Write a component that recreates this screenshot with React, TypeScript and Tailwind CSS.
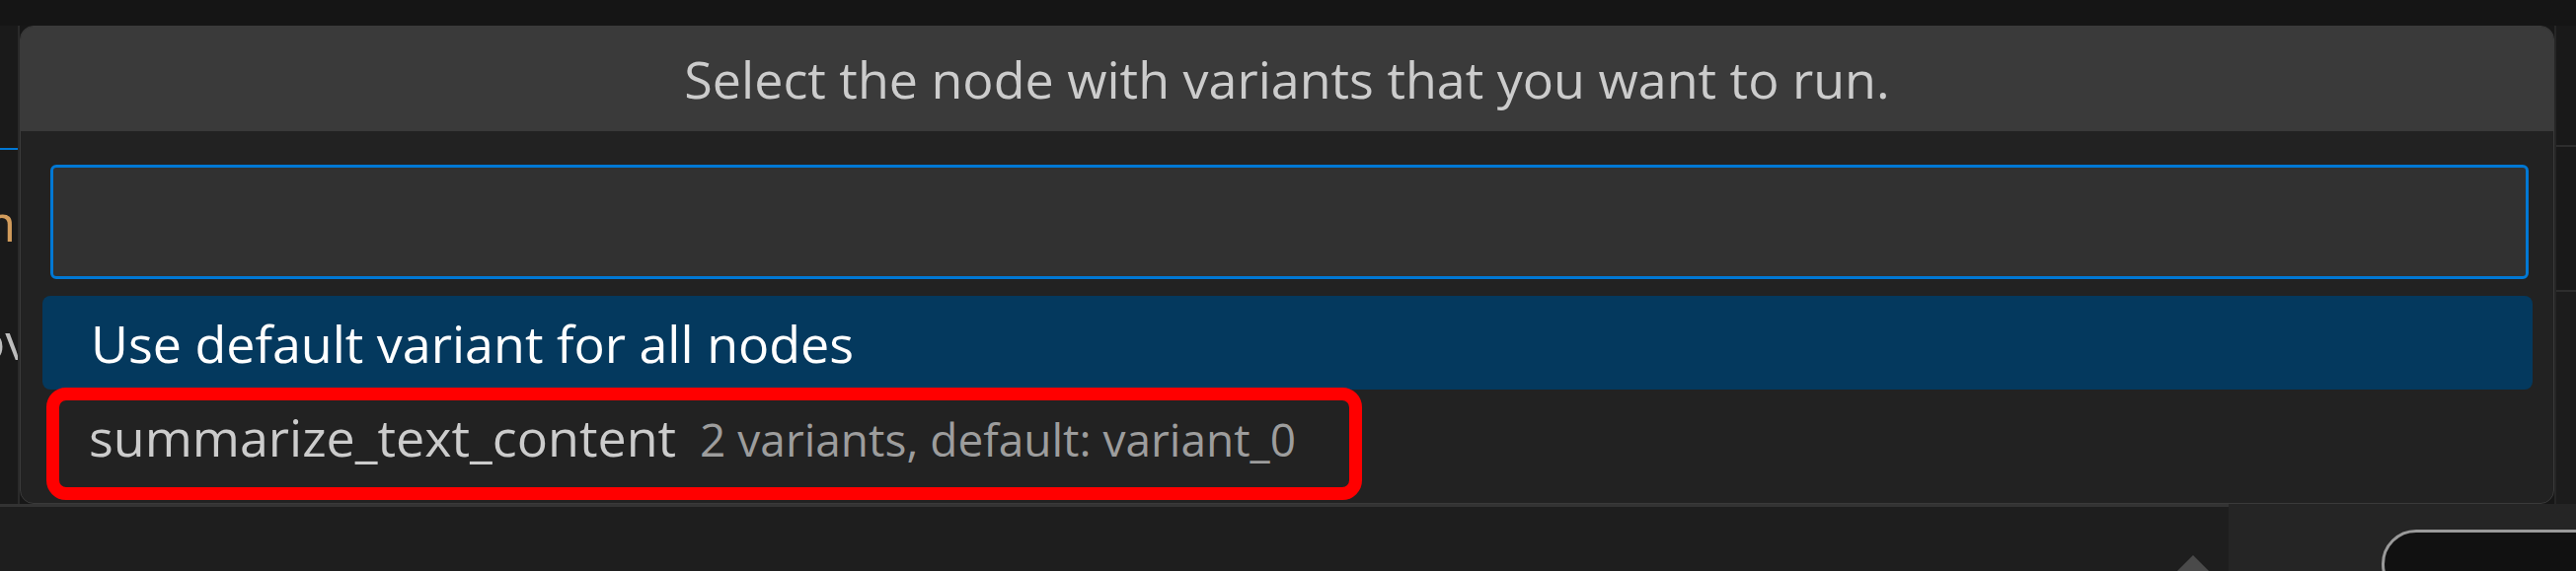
import React from 'react';

// quick pick overlay: "run with variants" node selection
const font = "font-['Open_Sans','Noto_Sans',sans-serif]";

const LeftGutter = () => (
  <div className="relative w-[20px] shrink-0 overflow-hidden bg-[#1a1a1a] border-r-2 border-[#2a2a2a] flex flex-col">
    <div className="h-[124px]" />
    <div className="h-[2px] bg-[#0078d4]" />
    <div className="mt-[47px] h-[52px] whitespace-nowrap text-[52px] leading-[52px] text-[#d29c5c] ml-[-32px]">m</div>
    <div className="mt-[68px] h-[52px] whitespace-nowrap text-[52px] leading-[52px] text-[#bdbdbd] ml-[-26px]">ov</div>
  </div>
);

const RightGutter = () => (
  <div className="flex-1 flex flex-col bg-[#191919] border-l-2 border-[#262626]">
    <div className="h-[121px]" />
    <div className="h-[147px] border-t-2 border-[#2d2d2d]" />
    <div className="flex-1 border-t-2 border-[#2d2d2d] bg-[#1c1c1c]" />
  </div>
);

const QuickPick = () => (
  <div className="w-[2568px] shrink-0 flex flex-col rounded-[14px] border border-[#3a3a3a] bg-[#222222] overflow-hidden">
    <div className="h-[106px] bg-[#3a3a3a] flex items-center justify-center text-[52px] leading-none text-[#cccccc]">
      Select the node with variants that you want to run.
    </div>

    <div className="mt-[34px] ml-[30px] mr-[25px] h-[116px] rounded-[6px] border-[3px] border-[#0078d4] bg-[#313131]" />

    <div className="mt-[17px] ml-[22px] mr-[21px] flex flex-col">
      <div className="h-[95px] rounded-[8px] bg-[#04395e] flex items-center pl-[49px] text-[52px] leading-none text-white">
        Use default variant for all nodes
      </div>
      <div className="relative h-[95px] flex items-baseline pt-[22px] pl-[47px] leading-none">
        <span className="text-[52px] text-[#cccccc]">summarize_text_content</span>
        <span className="ml-[24px] text-[46px] text-[#9d9d9d]">2 variants, default: variant_0</span>
        {/* annotation box drawn over the row */}
        <div className="absolute left-[4px] top-[-2px] w-[1333px] h-[114px] rounded-[20px] border-[13px] border-[#ff0000]" />
      </div>
    </div>
  </div>
);

const BottomBar = () => (
  <div className="flex-1 flex">
    <div className="w-[2258px] border-t-[3px] border-[#333333] bg-[#1e1e1e] flex justify-end pr-[20px]">
      <svg width="32" height="16" viewBox="0 0 32 16" className="mt-[49px]">
        <polygon points="16,0 32,16 0,16" fill="#4a4a4a" />
      </svg>
    </div>
    <div className="flex-1 bg-[#252525] overflow-hidden pl-[155px] pt-[26px]">
      <div className="w-[260px] h-[70px] rounded-[36px] border-[3px] border-[#9a9a9a] bg-[#111111]" />
    </div>
  </div>
);

export default function App() {
  return (
    <div className={`w-[2610px] h-[579px] overflow-hidden flex flex-col bg-[#171717] ${font}`}>
      <div className="h-[26px] shrink-0 bg-[#151515]" />
      <div className="h-[485px] shrink-0 flex">
        <LeftGutter />
        <QuickPick />
        <RightGutter />
      </div>
      <BottomBar />
    </div>
  );
}
